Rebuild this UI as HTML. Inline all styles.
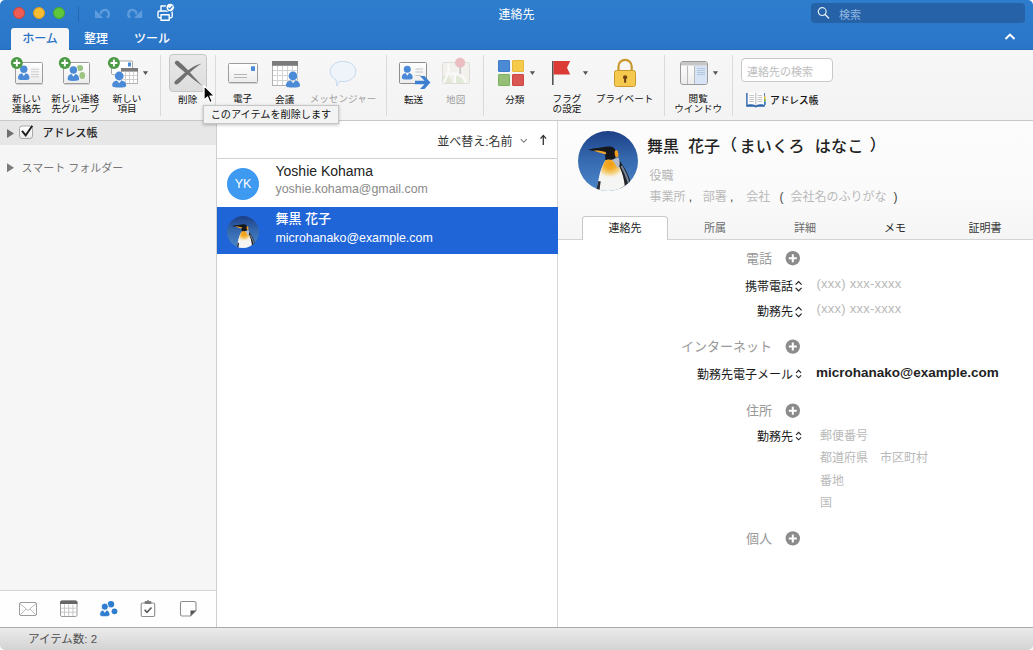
<!DOCTYPE html>
<html lang="ja">
<head>
<meta charset="utf-8">
<title>連絡先</title>
<style>
*{box-sizing:border-box;margin:0;padding:0}
html,body{width:1033px;height:650px;overflow:hidden;background:#fff}
body{font-family:"Liberation Sans","Noto Sans CJK JP",sans-serif;font-size:12px;color:#222;position:relative}
.abs{position:absolute}
#titlebar{position:absolute;left:0;top:0;width:1033px;height:50px;border-radius:5px 5px 0 0;background:linear-gradient(#2e7dcd,#2a75c8);border-bottom:1px solid #2769ba}
.tl{position:absolute;top:6.5px;width:12px;height:12px;border-radius:50%}
#title{position:absolute;left:0;width:1033px;top:7.4px;text-align:center;color:#fff;font-size:12px;line-height:16px}
#search{position:absolute;left:811px;top:3px;width:214px;height:20px;border-radius:4px;background:#2562a8}
#search span{position:absolute;left:28px;top:3.5px;font-size:11px;line-height:16px;color:#93b7e0}
.tab{position:absolute;top:29px;height:21px;font-size:12px;font-weight:500;line-height:20px;color:#fff;text-align:center}
#tabhome{left:11px;top:28px;height:22px;line-height:22px;width:58px;background:#f6f6f6;color:#2a72c5;border-radius:3px 3px 0 0}
#ribbon{position:absolute;left:0;top:50px;width:1033px;height:71px;background:linear-gradient(#f7f7f7,#f3f3f3);border-bottom:1px solid #c9c9c9}
#ribsvg{position:absolute;left:0;top:50px}
.rl{position:absolute;width:80px;margin-left:-40px;font-size:9.6px;line-height:10px;text-align:center;color:#111;white-space:nowrap;top:94px}
.rl.dis{color:#a0a0a0}
#sidebar{position:absolute;left:0;top:120px;width:216px;height:507px;background:#f6f6f6}
#sidebarborder{position:absolute;left:216px;top:120px;width:1px;height:508px;background:#cfcfcf}
#list{position:absolute;left:217px;top:120px;width:340px;height:508px;background:#fff}
#listborder{position:absolute;left:557px;top:120px;width:1px;height:508px;background:#d6d6d6}
#detail{position:absolute;left:558px;top:120px;width:475px;height:508px;background:#fff}
#status{position:absolute;left:0;top:627px;width:1033px;height:23px;background:linear-gradient(#ebebeb,#d3d3d3);border-top:1px solid #a9a9a9;font-size:11.500px;line-height:22px;color:#505050;border-radius:0 0 5px 5px}

.dk{color:#444}
.dtab{position:absolute;top:96px;width:86px;height:24px;font-size:11px;line-height:24px;text-align:center}
.sec{position:absolute;right:261px;font-size:13px;line-height:18px;color:#999;white-space:nowrap}
.lab{position:absolute;right:240px;font-size:12px;line-height:18px;color:#1a1a1a;white-space:nowrap}
.ph{position:absolute;font-size:12px;line-height:18px;color:#b9b9b9;white-space:nowrap}

</style>
</head>
<body>
<div id="titlebar">
  <div class="tl" style="left:13px;background:#ee5c54;border:.5px solid #d2443c"></div>
  <div class="tl" style="left:33px;background:#f8bc33;border:.5px solid #d9a023"></div>
  <div class="tl" style="left:53px;background:#5ec73c;border:.5px solid #49a82b"></div>
  <svg class="abs" style="left:70px;top:0" width="120" height="27" viewBox="70 0 120 27">
    <rect x="78" y="6.5" width="1" height="15" fill="#2466b2"/>
    <g fill="none" stroke="#5e9bdc" stroke-width="2.2">
      <path d="M100.7 14.4 A4.1 4.1 0 1 1 106.9 17.6"/>
      <path d="M136.5 14.4 A4.1 4.1 0 1 0 130.3 17.6"/>
    </g>
    <path d="M95 9.7 V17.9 H103.2 Z" fill="#5e9bdc"/>
    <path d="M142.2 9.7 V17.9 H134 Z" fill="#5e9bdc"/>
    <g fill="none" stroke="#fff" stroke-width="1.4" stroke-linejoin="round">
      <path d="M161 11 V6 H169 V11"/>
      <rect x="158" y="11" width="14.2" height="6.8" rx="1.6"/>
      <rect x="161" y="14.8" width="8.2" height="5.4" fill="#2d7bcb"/>
    </g>
    <circle cx="170.2" cy="7.5" r="4.2" fill="#fff" stroke="#2d7bcb" stroke-width="1"/>
    <path d="M168.2 7.6 L169.7 9.1 L172.3 6.1" fill="none" stroke="#2d7bcb" stroke-width="1.2"/>
  </svg>
  <div id="title">連絡先</div>
  <div id="search">
    <svg class="abs" style="left:5px;top:2px" width="16" height="16" viewBox="0 0 16 16"><circle cx="6.2" cy="6.6" r="3.9" fill="none" stroke="#e6eef8" stroke-width="1.2"/><path d="M9.1 9.5 L12.6 13" stroke="#e6eef8" stroke-width="1.4" stroke-linecap="round"/></svg>
    <span>検索</span></div>
  <div class="tab" id="tabhome">ホーム</div>
  <div class="tab" style="left:76px;width:40px">整理</div>
  <div class="tab" style="left:126px;width:52px">ツール</div>
  <svg class="abs" style="left:1003px;top:31px" width="14" height="12" viewBox="0 0 14 12"><path d="M2.5 8 L7 3.6 L11.5 8" fill="none" stroke="#fff" stroke-width="2"/></svg>
</div>
<div id="ribbon"></div>
<svg id="ribsvg" width="1033" height="70" viewBox="0 50 1033 70">
  <defs>
    <linearGradient id="cardg" x1="0" y1="0" x2="0" y2="1"><stop offset="0" stop-color="#ffffff"/><stop offset="1" stop-color="#ececec"/></linearGradient>
    <linearGradient id="delg" x1="0" y1="0" x2="0" y2="1"><stop offset="0" stop-color="#e9e9e9"/><stop offset="1" stop-color="#dcdcdc"/></linearGradient>
    <g id="person">
      <circle cx="0" cy="0" r="3.7"/>
      <path d="M-5.7 9 C-5.7 5.6 -3.6 4.4 -1.9 4.1 L0 6.8 L1.9 4.1 C3.6 4.4 5.7 5.6 5.7 9 C5.7 10.4 4 10.9 0 10.9 C-4 10.9 -5.7 10.4 -5.7 9Z"/>
    </g>
    <g id="personL">
      <circle cx="0" cy="0" r="4.4"/>
      <path d="M-7 9.4 C-7 5.9 -4.4 4.7 -2.3 4.4 L0 7.3 L2.3 4.4 C4.4 4.7 7 5.9 7 9.4 C7 11 4.9 11.5 0 11.5 C-4.9 11.5 -7 11 -7 9.4Z"/>
    </g>
    <g id="plus">
      <circle cx="0" cy="0" r="6" fill="#4c9a45"/>
      <path d="M-3.4 0 H3.4 M0 -3.4 V3.4" stroke="#fff" stroke-width="1.9" fill="none"/>
    </g>
    <path id="dd" d="M-2.6 -1.8 H2.6 L0 2 Z" fill="#555"/>
  </defs>
  <!-- separators -->
  <g fill="#dadada">
    <rect x="160" y="55" width="1" height="61"/><rect x="215" y="55" width="1" height="61"/>
    <rect x="386" y="55" width="1" height="61"/><rect x="483" y="55" width="1" height="61"/>
    <rect x="664" y="55" width="1" height="61"/><rect x="732" y="55" width="1" height="61"/>
  </g>
  <!-- 1 new contact -->
  <rect x="15.5" y="62.5" width="27" height="21" rx="1" fill="url(#cardg)" stroke="#9c9c9c"/>
  <rect x="16" y="84" width="27" height="1" fill="#d5d5d5"/>
  <use href="#person" x="23.8" y="69.2" fill="#4a8ad6"/>
  <path d="M31 69.2 H39 M31 71.8 H39 M31 74.4 H39 M31 76.8 H39" stroke="#cdcdcd" stroke-width="1"/>
  <use href="#plus" x="16.8" y="63"/>
  <!-- 2 new group -->
  <rect x="63.5" y="62.5" width="26" height="21" rx="1" fill="url(#cardg)" stroke="#9c9c9c"/>
  <rect x="64" y="84" width="26" height="1" fill="#d5d5d5"/>
  <g fill="#9cc583"><circle cx="80" cy="68" r="3.1"/><ellipse cx="82.300" cy="75.500" rx="2.900" ry="3.600"/></g>
  <g fill="#f6f6f6"><circle cx="73.4" cy="70" r="4.6"/></g>
  <use href="#person" x="73.4" y="70" fill="#4a8ad6"/>
  <use href="#plus" x="64.8" y="63"/>
  <!-- 3 new item -->
  <rect x="111.5" y="61" width="21" height="13.5" rx="1" fill="#fff" stroke="#a5a5a5"/>
  <rect x="128" y="62.5" width="3" height="4" fill="#4a8ad6"/>
  <rect x="121.5" y="68.5" width="16" height="15" fill="#fff" stroke="#b5b5b5"/>
  <rect x="121" y="68" width="17" height="3.6" fill="#7b7b7b"/>
  <path d="M125.5 72 V83 M129.5 72 V83 M133.5 72 V83 M122 75.5 H137 M122 79.5 H137" stroke="#d0d0d0" stroke-width="1" fill="none"/>
  <g fill="#f6f6f6"><circle cx="119.2" cy="76.2" r="4.8"/></g>
  <use href="#personL" x="119.2" y="76" fill="#4a8ad6"/>
  <use href="#plus" x="113.9" y="63"/>
  <use href="#dd" x="145.5" y="73"/>
  <!-- 4 delete -->
  <rect x="169.5" y="54.5" width="37" height="37" rx="3.5" fill="url(#delg)" stroke="#c6c6c6"/>
  <path d="M175 63.7 C174.2 61.6 176.4 59.9 178.4 61.2 C182.5 64.2 186.5 68.6 190 72.5 C194 77 198.500 81.800 202.400 85.900 C197.500 82.700 192 78.300 187.800 74.700 C183.5 71 178.5 67.5 175 63.700Z" fill="#707070"/>
  <path d="M201.800 63.600 C198.500 64.300 195.500 65.600 192.500 67.300 C188.500 69.600 184.500 72.800 181 76 C178.600 78.200 176 80 174.800 81.600 C173.600 83.400 175.200 85 177.200 84.300 C179.500 83.300 181.500 80.800 184 78.300 C187.500 74.800 191 71.300 194.500 68.600 C197 66.600 199.500 64.900 201.800 63.600Z" fill="#707070"/>
  <!-- 5 email -->
  <rect x="228.5" y="63.5" width="29" height="19" rx="1" fill="url(#cardg)" stroke="#9c9c9c"/>
  <rect x="229" y="83" width="29" height="1" fill="#d5d5d5"/>
  <rect x="251" y="66.3" width="4" height="4.6" fill="#4a8ad6"/>
  <path d="M234 74.5 H247 M234 77.5 H247" stroke="#b5b5b5" stroke-width="1"/>
  <!-- 6 meeting -->
  <rect x="272.5" y="61.5" width="25" height="24" fill="#fff" stroke="#b0b0b0"/>
  <rect x="272" y="61" width="26" height="4.8" fill="#7b7b7b"/>
  <path d="M277.5 66 V85 M282.5 66 V85 M287.5 66 V85 M292.5 66 V85 M273 70.5 H298 M273 75.5 H298 M273 80.5 H298" stroke="#d3d3d3" stroke-width="1" fill="none"/>
  <g fill="#f8f8f8"><circle cx="293" cy="75.8" r="5"/></g>
  <use href="#personL" x="293" y="76" fill="#4a8ad6"/>
  <!-- 7 messenger -->
  <path transform="translate(0 .6)" d="M343 60.8 C350.4 60.8 355.8 65.2 355.8 70.8 C355.8 76.6 350 81 343 81 C341.6 81 340.4 80.9 339.3 80.6 C338.6 82.6 337.6 84.2 336.8 85.4 C336.6 83.4 336.6 81.4 336 79.4 C332.4 77.6 330.2 74.4 330.2 70.8 C330.2 65.2 335.6 60.8 343 60.8Z" fill="#eff4fa" stroke="#c3d9f0" stroke-width="1"/>
  <!-- 8 forward -->
  <rect x="399.5" y="62.5" width="27" height="21" rx="1" fill="url(#cardg)" stroke="#8e8e8e"/>
  <use href="#person" x="407.3" y="69.2" fill="#4a8ad6" transform="translate(407.3 69.2) scale(.95) translate(-407.3 -69.2)"/>
  <path d="M415.5 69 H423 M415.5 72 H423 M415.5 75.5 H421" stroke="#c4c4c4" stroke-width="1"/>
  <path d="M415 80.8 H424.6 L420 76 H424.4 L430.4 82.5 L424.4 89 H420 L424.6 84.2 H415Z" fill="#3c7fd0"/>
  <!-- 9 map -->
  <g opacity=".55">
    <rect x="442.5" y="62.5" width="27" height="21" rx="1" fill="#f1eee6" stroke="#cfcac2"/>
    <path d="M443 76 H449 L453 83 H443Z M456 76 C460 76 463 79 464 83 H456Z" fill="#cfe2bd"/>
    <path d="M448.5 63 V70 C448.500 75 445 79 443.500 83 M455 83 V74 M448.500 73.500 H455 C460 73.500 464.500 77 466 83" stroke="#fff" stroke-width="2" fill="none"/>
    <rect x="459.400" y="66" width="1.500" height="8" fill="#9a9a9a"/>
    <circle cx="460.100" cy="62.800" r="5" fill="#df8f96"/>
  </g>
  <!-- 10 categories -->
  <rect x="498.500" y="60.500" width="11" height="11" rx=".5" fill="#4b8bd6" stroke="#3f7cc6"/>
  <rect x="512.500" y="60.500" width="11" height="11" rx=".5" fill="#f6cb4b" stroke="#e6b93a"/>
  <rect x="498.500" y="74.500" width="11" height="11" rx=".5" fill="#93c076" stroke="#7eb160"/>
  <rect x="512.500" y="74.500" width="11" height="11" rx=".5" fill="#d95753" stroke="#cc4541"/>
  <use href="#dd" x="532.400" y="73"/>
  <!-- 11 flag -->
  <rect x="552" y="61" width="1.600" height="24" fill="#555"/>
  <path d="M553.600 61 H570.200 L567 67.700 L570.200 74.400 H553.600Z" fill="#dc3b35"/>
  <use href="#dd" x="585.500" y="73"/>
  <!-- 12 lock -->
  <path d="M618.500 71 V66.500 A6.600 6.600 0 0 1 631.700 66.500 V71" fill="none" stroke="#c9982e" stroke-width="2.200"/>
  <rect x="614.500" y="70.500" width="21" height="16" rx="2" fill="#f5c94d" stroke="#c9982e"/>
  <circle cx="625.100" cy="77.300" r="2.100" fill="#6e4212"/>
  <rect x="624.100" y="77.500" width="2" height="5.200" fill="#6e4212"/>
  <!-- 13 reading pane -->
  <rect x="680.500" y="61.500" width="27" height="23" rx="2.500" fill="url(#cardg)" stroke="#9a9a9a"/>
  <path d="M695 65.500 H707 V82 Q707 84 705 84 H695Z" fill="#d6e4f6"/>
  <path d="M681 65.500 V64 Q681 62 683 62 H705 Q707 62 707 64 V65.500Z" fill="#c6c6c6"/>
  <path d="M687.500 66 V84 M694.500 66 V84" stroke="#b9b9b9" stroke-width="1"/>
  <path d="M697 68.500 H705 M697 70.500 H705 M697 72.500 H705 M697 74.500 H705" stroke="#a9bfdc" stroke-width=".8"/>
  <use href="#dd" x="715.500" y="73"/>
  <!-- 14 search input -->
  <rect x="741.500" y="58.500" width="91" height="23" rx="3.500" fill="#fff" stroke="#c9c9c9"/>
  <!-- 15 book -->
  <path d="M746.200 93 H764.800 V106.800 H757.500 L755.800 107.600 L754.100 106.800 H746.200Z" fill="#2c64ac"/>
  <rect x="764" y="96.500" width="1.800" height="2.800" fill="#e9c83c"/><rect x="764" y="99.300" width="1.800" height="2.800" fill="#72b14e"/><rect x="764" y="102.100" width="1.800" height="2.800" fill="#3b7fd0"/>
  <path d="M747.600 92.800 C750.300 91.900 753.400 92 755.800 93.200 C758.200 92 761.300 91.900 764 92.800 V104.800 C761.300 104 758.200 104.200 755.800 105.500 C753.400 104.200 750.300 104 747.600 104.800Z" fill="#fdfdfd"/>
  <path d="M755.800 93.200 V105.500" stroke="#a9a9a9" stroke-width=".8"/>
  <path d="M749.300 95.500 H754 M749.300 97.500 H754 M749.300 99.500 H754 M749.300 101.500 H754 M757.500 95.500 H762.200 M757.500 97.500 H762.200 M757.500 99.500 H762.200 M757.500 101.500 H762.200" stroke="#c6c6c6" stroke-width="1"/>
</svg>
<div class="rl" style="left:26.500px">新しい<br>連絡先</div>
<div class="rl" style="left:75.200px">新しい連絡<br>先グループ</div>
<div class="rl" style="left:127px">新しい<br>項目</div>
<div class="rl" style="left:187.700px;top:95px">削除</div>
<div class="rl" style="left:242.600px">電子<br>メール</div>
<div class="rl" style="left:284.700px;top:95px">会議</div>
<div class="rl dis" style="left:343px;top:94px">メッセンジャー</div>
<div class="rl" style="left:413.600px;top:95px">転送</div>
<div class="rl dis" style="left:455.700px;top:95px">地図</div>
<div class="rl" style="left:514.800px;top:95px">分類</div>
<div class="rl" style="left:567px">フラグ<br>の設定</div>
<div class="rl" style="left:624.600px;top:94px">プライベート</div>
<div class="rl" style="left:698.200px">閲覧<br>ウインドウ</div>
<div class="abs" style="left:747px;top:64px;font-size:11px;line-height:16px;color:#bdbdbd">連絡先の検索</div>
<div class="abs" style="left:770px;top:94.5px;font-size:9.7px;line-height:12px;color:#111;font-weight:500">アドレス帳</div>
<svg width="0" height="0" style="position:absolute">
  <defs>
    <linearGradient id="sky" x1="0" y1="0" x2="0" y2="1"><stop offset="0" stop-color="#1c3f86"/><stop offset=".45" stop-color="#3568ae"/><stop offset="1" stop-color="#4a86c9"/></linearGradient>
    <radialGradient id="chest" cx=".45" cy=".22" r=".75"><stop offset="0" stop-color="#f19c14"/><stop offset=".35" stop-color="#f3ae2c"/><stop offset=".6" stop-color="#f5cf7a"/><stop offset=".85" stop-color="#f6f1e6"/><stop offset="1" stop-color="#f5f5f3"/></radialGradient>
    <clipPath id="pc"><circle cx="30" cy="30" r="30"/></clipPath>
    <g id="penguin" clip-path="url(#pc)">
      <rect width="60" height="60" fill="url(#sky)"/>
      <path d="M39.500 27.500 C44 32 48 39 50.500 45 C52.500 50 53.500 55 54.500 60 L42 60 C43 50 41 39 36.500 30Z" fill="#1f2127"/>
      <path d="M43.500 35 C46.500 40 49 46 50.800 52" stroke="#73849a" stroke-width="2" fill="none"/>
      <path d="M27.500 29 C24.500 34 22 40 21 46 C20 51 19 56 18.300 60 L47 60 C47 50 44.500 41 39.500 33 C36.500 29 31 27.500 27.500 29Z" fill="#f5f5f3"/>
      <path d="M27.500 29 C25 33.500 23 39 21.800 45 C27 50 38.500 50 44.500 45.500 C43.500 40 41.500 35.500 39 31.500 C35.500 28 30.500 27.500 27.500 29Z" fill="url(#chest)"/>
      <path d="M20.300 50 C19.500 53 18.800 56.500 18.300 60 L21.500 60 C21.800 56.500 22.200 53 22.800 50.500Z" fill="#2a2c33"/>
      <path d="M32.500 27.500 C35 30 37.500 33 40 37.500 C42.500 34 42 30 40.300 26.400 C38 27.600 35 28 32.500 27.500Z" fill="#b4bccb"/>
      <path d="M10.200 18.600 C14 17.600 19 17 22 16.800 C25 16.200 28 15.400 31.800 15.600 C35.600 15.800 38.200 18.500 38.200 22.500 C38.200 26.200 36.500 28.800 33.300 28.700 C30 28.600 28 26.500 27.300 24.800 C26.800 23.600 27 22.400 26 21.600 L16.500 19.900 C14 19.800 12 19.400 10.200 18.600Z" fill="#16171b"/>
      <path d="M27.300 24.800 C27.200 26.500 27.300 28 27.500 29.200 C29.500 28.300 31.500 28 33.300 28.700Z" fill="#16171b"/>
      <path d="M15.500 19.500 C20 19.300 24.500 19.900 27.600 21 L28.300 23.300 C24.500 22.600 19.500 21.200 15.500 19.500Z" fill="#f3a72c"/>
      <ellipse cx="38.500" cy="22.800" rx="1.800" ry="3.700" fill="#ef9d20" transform="rotate(-8 38.500 22.800)"/>
    </g>
  </defs>
</svg>
<div id="sidebar">
  <div class="abs" style="left:0;top:1px;width:216px;height:23.500px;background:#e7e7e7"></div>
  <svg class="abs" style="left:0;top:0" width="216" height="60" viewBox="0 120 216 60">
    <path d="M7 129 L14 133.500 L7 138Z" fill="#6f6f6f"/>
    <path d="M7 163.300 L14 167.800 L7 172.300Z" fill="#7c7c7c"/>
    <defs><linearGradient id="cbg" x1="0" y1="0" x2="0" y2="1"><stop offset="0" stop-color="#fff"/><stop offset="1" stop-color="#ebebeb"/></linearGradient></defs>
    <rect x="19.500" y="126" width="13" height="12.500" rx="2.500" fill="url(#cbg)" stroke="#a9a9a9"/>
    <path d="M22 130.800 L25.700 135.400 L32.300 125.800" fill="none" stroke="#1e1e1e" stroke-width="1.900"/>
  </svg>
  <div class="abs" style="left:42.500px;top:5px;font-size:11px;line-height:16px;font-weight:500;color:#222">アドレス帳</div>
  <div class="abs" style="left:21.500px;top:39.500px;font-size:11px;line-height:16px;color:#777">スマート フォルダー</div>
  <div class="abs" style="left:0;top:470px;width:216px;height:38px;background:#fefefe;border-top:1px solid #d4d4d4"></div>
  <svg class="abs" style="left:0;top:470px" width="216" height="38" viewBox="0 590 216 38">
    <!-- mail -->
    <rect x="19.500" y="602.500" width="17" height="13" rx="1.500" fill="#fff" stroke="#9b9b9b"/>
    <path d="M20 603.500 L28 610.500 L36 603.500 M20 615 L26 609 M36 615 L30 609" fill="none" stroke="#b3b3b3" stroke-width=".9"/>
    <!-- calendar -->
    <rect x="60.500" y="601" width="16.500" height="15.500" rx="1.500" fill="#fff" stroke="#9b9b9b"/>
    <path d="M60 602.500 Q60 600.500 62 600.500 H75.500 Q77.500 600.500 77.500 602.500 V604 H60Z" fill="#666"/>
    <path d="M64.500 604.500 V616 M68.700 604.500 V616 M72.900 604.500 V616 M61 608.200 H77 M61 612.200 H77" stroke="#c3c3c3" stroke-width=".9" fill="none"/>
    <!-- people -->
    <g fill="#2f7dd1">
      <circle cx="111" cy="604.200" r="3.200"/>
      <circle cx="114.500" cy="611.300" r="2.900"/>
      <circle cx="104.800" cy="606.700" r="3.600" stroke="#fafafa" stroke-width="1"/>
      <path d="M99.800 614.500 C99.800 611.500 101.600 610.400 103.100 610.200 L104.800 612.400 L106.500 610.200 C108 610.400 109.800 611.500 109.800 614.500 C109.800 616 108.500 616.500 104.800 616.500 C101.100 616.500 99.800 616 99.800 614.500Z" stroke="#fafafa" stroke-width=".6"/>
    </g>
    <!-- tasks -->
    <rect x="141.200" y="603" width="13.500" height="13.500" rx="1.500" fill="#fff" stroke="#8d8d8d" stroke-width="1.100"/>
    <path d="M145 603.500 V601.500 H146.700 Q148 599.300 149.300 601.500 H151 V603.500Z" fill="#777" stroke="#777" stroke-width=".8"/>
    <path d="M144.600 609.800 L147 612.300 L151.500 607.500" fill="none" stroke="#555" stroke-width="1.500"/>
    <!-- notes -->
    <path d="M182 601.500 H194 Q196 601.500 196 603.500 V610.500 L190.500 616 H182 Q180.500 616 180.500 614.500 V603 Q180.500 601.500 182 601.500Z" fill="#fff" stroke="#8d8d8d" stroke-width="1.100"/>
    <path d="M196 610.500 L190.500 616 V610.500Z" fill="#555"/>
  </svg>
</div>
<div id="sidebarborder"></div>
<div id="list">
  <div class="abs" style="left:0;top:38px;width:340px;height:1px;background:#d2d2d2"></div>
  <div class="abs" style="right:44.500px;top:13px;font-size:12px;line-height:18px;color:#333;white-space:nowrap">並べ替え:名前</div>
  <svg class="abs" style="left:300px;top:10px" width="36" height="20" viewBox="517 130 36 20">
    <path d="M520.800 139.200 L523.800 142.300 L526.800 139.200" fill="none" stroke="#7a7a7a" stroke-width="1.100"/>
    <path d="M543.300 145 V135.600 M540.500 138.600 L543.300 135.400 L546.100 138.600" fill="none" stroke="#333" stroke-width="1.300"/>
  </svg>
  <div class="abs" style="left:10px;top:48px;width:32px;height:32px;border-radius:50%;background:#3e99f1;color:#fff;font-size:12.500px;line-height:32px;text-align:center">YK</div>
  <div class="abs" style="left:58.500px;top:42px;font-size:14px;line-height:18px;color:#222;white-space:nowrap">Yoshie Kohama</div>
  <div class="abs" style="left:58.500px;top:61px;font-size:12.400px;line-height:16px;color:#8a8a8a;white-space:nowrap">yoshie.kohama@gmail.com</div>
  <div class="abs" style="left:0;top:87px;width:341px;height:46.500px;background:#2065d8;z-index:2"></div>
  <svg class="abs" style="left:10px;top:96px;z-index:3" width="32" height="32" viewBox="0 0 60 60"><use href="#penguin"/></svg>
  <div class="abs" style="z-index:3;left:58.500px;top:90px;font-size:13px;line-height:18px;color:#fff;font-weight:500;white-space:nowrap">舞黒 花子</div>
  <div class="abs" style="z-index:3;left:58.500px;top:109.500px;font-size:12.400px;line-height:16px;color:#fff;white-space:nowrap">microhanako@example.com</div>
</div>
<div id="listborder"></div>
<div id="detail">
  <div class="abs" style="left:0;top:1px;width:475px;height:119px;background:linear-gradient(#fcfcfc,#fafafa 65%,#f5f5f5);border-bottom:1px solid #d4d4d4"></div>
  <svg class="abs" style="left:20px;top:11px" width="60" height="60" viewBox="0 0 60 60"><use href="#penguin"/></svg>
  <div class="abs" style="left:89px;top:15.300px;font-size:16px;line-height:24px;color:#222;font-weight:500;white-space:pre">舞黒  花子<span style="position:relative;top:-2px;margin-left:1px;margin-right:2.500px">（</span><span style="letter-spacing:.4px">まいくろ  はなこ</span><span style="position:relative;top:-2px;margin-left:1.500px"> ）</span></div>
  <div class="abs" style="left:91.500px;top:48.300px;font-size:12px;line-height:16px;color:#b4b4b4">役職</div>
  <div class="abs" style="left:91.500px;top:69px;font-size:12px;line-height:16px;color:#b9b9b9;white-space:pre">事業所<span class="dk"> ,</span><span style="margin-left:10.500px">部署</span><span class="dk"> ,</span><span style="margin-left:12.800px">会社</span><span class="dk" style="margin-left:9.200px">(</span><span style="margin-left:7px">会社名のふりがな</span><span class="dk" style="margin-left:7px">)</span></div>
  <div class="dtab" style="left:24px;background:#fff;border:1px solid #c9c9c9;border-bottom:none;border-radius:3.500px 3.500px 0 0;color:#222;line-height:22px">連絡先</div>
  <div class="dtab" style="left:114px;color:#6a6a6a">所属</div>
  <div class="dtab" style="left:204px;color:#6a6a6a">詳細</div>
  <div class="dtab" style="left:294px;color:#222">メモ</div>
  <div class="dtab" style="left:384px;color:#333">証明書</div>

  <div class="sec" style="top:129.500px">電話</div>
  <div class="sec" style="top:218px">インターネット</div>
  <div class="sec" style="top:281.500px">住所</div>
  <div class="sec" style="top:409.500px">個人</div>
  <svg class="abs" style="left:0;top:0" width="475" height="508" viewBox="558 120 475 508">
    <g id="pl1"><circle cx="792.800" cy="258.200" r="7.200" fill="#8b8b8b"/><path d="M788.800 258.200 H796.800 M792.800 254.200 V262.200" stroke="#fff" stroke-width="2" fill="none"/></g>
    <use href="#pl1" y="88.400"/>
    <use href="#pl1" y="152.500"/>
    <use href="#pl1" y="280.200"/>
    <g id="st1" fill="none" stroke="#222" stroke-width="1.200"><path d="M795.600 284.600 L798.600 281.600 L801.600 284.600 M795.600 287.800 L798.600 290.800 L801.600 287.800"/></g>
    <use href="#st1" y="25.800"/>
    <g id="st2" fill="none" stroke="#222" stroke-width="1.100"><path d="M796.100 372.900 L798.600 370.400 L801.100 372.900 M796.100 375.300 L798.600 377.800 L801.100 375.300"/></g>
    <use href="#st2" y="62"/>
  </svg>
  <div class="lab" style="top:157.500px">携帯電話</div>
  <div class="lab" style="top:183px">勤務先</div>
  <div class="lab" style="top:246px">勤務先電子メール</div>
  <div class="lab" style="top:308px">勤務先</div>
  <div class="ph" style="left:258.500px;top:155px;font-size:13px;letter-spacing:.25px">(xxx) xxx-xxxx</div>
  <div class="ph" style="left:258.500px;top:180px;font-size:13px;letter-spacing:.25px">(xxx) xxx-xxxx</div>
  <div class="abs" style="left:258px;top:243.500px;font-size:13.500px;line-height:18px;font-weight:700;color:#222;white-space:nowrap">microhanako@example.com</div>
  <div class="ph" style="left:262px;top:307px">郵便番号</div>
  <div class="ph" style="left:262px;top:328.500px;white-space:pre">都道府県　市区町村</div>
  <div class="ph" style="left:262px;top:352px">番地</div>
  <div class="ph" style="left:262px;top:374px">国</div>
</div>
<div id="status"><span style="position:absolute;left:28px">アイテム数: 2</span></div>
<div class="abs" style="left:0;top:120px;width:1033px;height:1px;background:#c8c8c8"></div>
<!-- tooltip and cursor -->
<div class="abs" style="left:203px;top:105px;width:136px;height:19px;background:#f3f3f3;border:.5px solid #c6c6c6;box-shadow:0 1px 3px rgba(0,0,0,.25);font-size:10.150px;line-height:18px;color:#111;padding-left:6.700px;white-space:nowrap">このアイテムを削除します</div>
<svg class="abs" style="left:200.200px;top:82px" width="18" height="24" viewBox="0 0 18 24">
  <path d="M4 3.500 V18.200 L7.500 15 L9.900 20.600 L12.300 19.600 L9.900 14.100 H14.500Z" fill="#000" stroke="#fff" stroke-width="1.300" stroke-linejoin="round"/>
</svg>
</body>
</html>
